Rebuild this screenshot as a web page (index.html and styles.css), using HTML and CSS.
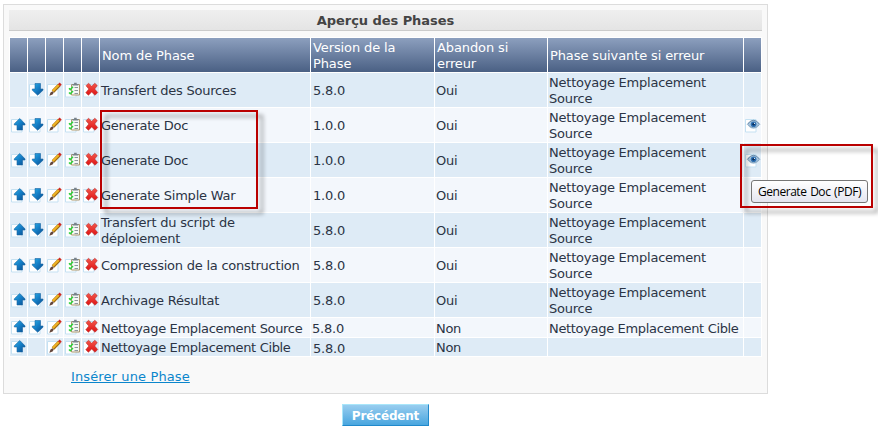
FILE: index.html
```html
<!DOCTYPE html>
<html lang="fr">
<head>
<meta charset="utf-8">
<title>Aperçu des Phases</title>
<link rel="stylesheet" href="styles.css">
</head>
<body>
<svg class="defs" width="0" height="0" aria-hidden="true">
  <defs>
    <linearGradient id="blue" x1="0" y1="0" x2="1" y2="1"><stop offset="0" stop-color="#2db0e8"/><stop offset=".5" stop-color="#147cc4"/><stop offset="1" stop-color="#0a4c8c"/></linearGradient>
    <linearGradient id="red" x1="0" y1="0" x2="0" y2="1"><stop offset="0" stop-color="#f4574c"/><stop offset="1" stop-color="#de1313"/></linearGradient>
    <symbol id="page" viewBox="0 0 17 18"><path d="M1.5 3.5h10.5v12.5h-10.500z" fill="#fff" stroke="#c5e1f2"/></symbol>
    <symbol id="up" viewBox="0 0 17 18"><use href="#page"/><path d="M9.700 2.500L15 7.800V9h-2.500v5h-5.500V9H4.300V7.800z" fill="url(#blue)" stroke="#1b65a2" stroke-width=".6"/></symbol>
    <symbol id="down" viewBox="0 0 17 18"><use href="#page"/><path d="M7 2.500h5.500V8H15v1.200L9.700 14.300 4.300 9.200V8H7z" fill="url(#blue)" stroke="#1b65a2" stroke-width=".6"/></symbol>
    <symbol id="edit" viewBox="0 0 17 18"><use href="#page"/><path d="M7 10.500L13.300 4" stroke="#9c6a12" stroke-width="3.400"/><path d="M6.800 10L13 3.700" stroke="#f0b323" stroke-width="2"/><path d="M13 4.300l1.700-1.700" stroke="#cf2a20" stroke-width="3"/><path d="M3.300 14.700l1.200-3.200 2-1.300 1.300 1.300-1.200 2z" fill="#65483c"/></symbol>
    <symbol id="list" viewBox="0 0 17 18"><use href="#page"/><path d="M7.500 3.500h8v10.500h-8z" fill="#f5f7f5" stroke="#ab976f"/><path d="M8.500 4.500V3h1.600V1.800h2.600V3H14.300v1.500z" fill="#77828a"/><path d="M10.500 6.500H14M10.500 9.500H14M10.500 12.500H14" stroke="#8a979d"/><path d="M5 7.300l1.300 1.300L9 5.800M5 11.500l1.300 1.300L9 10" fill="none" stroke="#2cd03b" stroke-width="1.500"/></symbol>
    <symbol id="delete" viewBox="0 0 17 18"><use href="#page"/><path d="M6.500 2.200l3.200 3 3.100-3L15.300 4.600 12.700 8l3 3.500-2.700 2.800-3.300-3.200-3.300 3.200L3.800 11.700 6.800 8 4 4.800z" fill="url(#red)" stroke="#a82525" stroke-width=".5"/></symbol>
    <symbol id="eye" viewBox="0 0 17 18"><use href="#page"/><path d="M3.300 8.500Q6 4 9.500 4T15.800 8.500Q13 12.700 9.500 12.700T3.300 8.500z" fill="#a9c6df"/><path d="M3.300 8.500Q6 4.300 9.500 4.300T15.800 8.500" fill="none" stroke="#6487a8"/><path d="M4.200 9Q9.500 14.300 15 9" fill="none" stroke="#86a5bf"/><circle cx="9.600" cy="8.300" r="2.800" fill="#2f70b2"/><circle cx="9.600" cy="8.300" r="1.300" fill="#092f5e"/><circle cx="10.500" cy="7.300" r=".6" fill="#fff"/></symbol>
  </defs>
</svg>

<main class="panel">
  <h1 class="title">Aperçu des Phases</h1>
  <div class="phases">
    <div class="row head"><i></i><i></i><i></i><i></i><i></i><span>Nom de Phase</span><span>Version de la Phase</span><span>Abandon si erreur</span><span>Phase suivante si erreur</span><i></i></div>
    <div class="row"><i></i><i><svg><use href="#down"/></svg></i><i><svg><use href="#edit"/></svg></i><i><svg><use href="#list"/></svg></i><i><svg><use href="#delete"/></svg></i><span>Transfert des Sources</span><span class="ver">5.8.0</span><span>Oui</span><span>Nettoyage Emplacement Source</span><i></i></div>
    <div class="row"><i><svg><use href="#up"/></svg></i><i><svg><use href="#down"/></svg></i><i><svg><use href="#edit"/></svg></i><i><svg><use href="#list"/></svg></i><i><svg><use href="#delete"/></svg></i><span>Generate Doc</span><span class="ver">1.0.0</span><span>Oui</span><span>Nettoyage Emplacement Source</span><i><svg><use href="#eye"/></svg></i></div>
    <div class="row"><i><svg><use href="#up"/></svg></i><i><svg><use href="#down"/></svg></i><i><svg><use href="#edit"/></svg></i><i><svg><use href="#list"/></svg></i><i><svg><use href="#delete"/></svg></i><span>Generate Doc</span><span class="ver">1.0.0</span><span>Oui</span><span>Nettoyage Emplacement Source</span><i><svg><use href="#eye"/></svg></i></div>
    <div class="row"><i><svg><use href="#up"/></svg></i><i><svg><use href="#down"/></svg></i><i><svg><use href="#edit"/></svg></i><i><svg><use href="#list"/></svg></i><i><svg><use href="#delete"/></svg></i><span>Generate Simple War</span><span class="ver">1.0.0</span><span>Oui</span><span>Nettoyage Emplacement Source</span><i></i></div>
    <div class="row"><i><svg><use href="#up"/></svg></i><i><svg><use href="#down"/></svg></i><i><svg><use href="#edit"/></svg></i><i><svg><use href="#list"/></svg></i><i><svg><use href="#delete"/></svg></i><span>Transfert du script de déploiement</span><span class="ver">5.8.0</span><span>Oui</span><span>Nettoyage Emplacement Source</span><i></i></div>
    <div class="row"><i><svg><use href="#up"/></svg></i><i><svg><use href="#down"/></svg></i><i><svg><use href="#edit"/></svg></i><i><svg><use href="#list"/></svg></i><i><svg><use href="#delete"/></svg></i><span>Compression de la construction</span><span class="ver">5.8.0</span><span>Oui</span><span>Nettoyage Emplacement Source</span><i></i></div>
    <div class="row"><i><svg><use href="#up"/></svg></i><i><svg><use href="#down"/></svg></i><i><svg><use href="#edit"/></svg></i><i><svg><use href="#list"/></svg></i><i><svg><use href="#delete"/></svg></i><span>Archivage Résultat</span><span class="ver">5.8.0</span><span>Oui</span><span>Nettoyage Emplacement Source</span><i></i></div>
    <div class="row short"><i><svg><use href="#up"/></svg></i><i><svg><use href="#down"/></svg></i><i><svg><use href="#edit"/></svg></i><i><svg><use href="#list"/></svg></i><i><svg><use href="#delete"/></svg></i><span>Nettoyage Emplacement Source</span><span class="ver">5.8.0</span><span>Non</span><span>Nettoyage Emplacement Cible</span><i></i></div>
    <div class="row last"><i><svg><use href="#up"/></svg></i><i></i><i><svg><use href="#edit"/></svg></i><i><svg><use href="#list"/></svg></i><i><svg><use href="#delete"/></svg></i><span>Nettoyage Emplacement Cible</span><span class="ver">5.8.0</span><span>Non</span><span></span><i></i></div>
  </div>
  <a class="insert" href="#">Insérer une Phase</a>
</main>
<button class="back" type="button">Précédent</button>

<div class="marker marker-names"></div>
<div class="marker marker-tip"></div>
<div class="tooltip">Generate Doc (PDF)</div>
</body>
</html>
```

FILE: styles.css
```css
* { box-sizing: border-box; }

body {
  position: relative;
  margin: 0;
  padding: 4px 0 0 3px;
  height: 431px;
  overflow: hidden;
  background: #fff;
  color: #2b3445;
  font: 13px/16px "DejaVu Sans", Verdana, sans-serif;
}

.defs { position: absolute; }

.panel {
  width: 765px;
  height: 390px;
  padding: 5px;
  border: 1px solid #dcdcdc;
  background: #f9f9f9;
}

.title {
  height: 21px;
  margin: 0;
  border-bottom: 1px solid #cbcbcb;
  background: linear-gradient(#efefef, #e4e4e4);
  color: #444;
  font-size: 13px;
  line-height: 21px;
  letter-spacing: -.06px;
  text-align: center;
}

.phases {
  display: grid;
  gap: 1px;
  width: 753px;
  margin-top: 6px;
  padding: 1px;
  background: #fff;
}

.row {
  display: grid;
  grid-template-columns: repeat(5, 17px) 210px 123px 112px 195px 17px;
  gap: 1px;
  height: 34px;
}

.row > * {
  display: flex;
  align-items: center;
  background: #f3f7fc;
}

.row:nth-child(even) > * { background: #deebf6; }

.row span {
  padding: 2px 2px 0 1px;
  letter-spacing: -.23px;
}

.row.head > * {
  background: linear-gradient(#8c9fbe, #4a6084);
  color: #fff;
}

.row.head span {
  padding-left: 2px;
  letter-spacing: -.11px;
}

.row .ver {
  padding-left: 2px;
  letter-spacing: -.2px;
}

.row.short { height: 19px; }
.row.last { height: 18px; }

.row.short span, .row.last span {
  letter-spacing: -.33px;
  white-space: nowrap;
}

.row.short .ver, .row.last .ver { letter-spacing: -.2px; }
.row.short .ver { padding-left: 1px; }

.row.last .ver {
  padding-top: 4px;
  line-height: 14px;
}

.row svg {
  display: block;
  flex: none;
  width: 17px;
  height: 18px;
}

.row.short svg, .row.last svg { margin-top: -1px; }

.insert {
  display: inline-block;
  margin: 12px 0 0 62px;
  color: #0b86cc;
  letter-spacing: .12px;
}

.back {
  display: block;
  width: 87px;
  height: 22px;
  margin: 10px 0 0 339px;
  padding: 0;
  border: 1px solid;
  border-color: #a8e6fa #2089cb #2089cb #a8e6fa;
  background: linear-gradient(#98cdef, #49a6df);
  color: #fff;
  font: bold 12px/22px "DejaVu Sans", Verdana, sans-serif;
  letter-spacing: -.2px;
}

.marker {
  position: absolute;
  border: 2px solid #ba0000;
  filter: drop-shadow(5px 5px 2px rgba(0, 0, 0, .4));
}

.marker-names { left: 100px; top: 110px; width: 158px; height: 99px; }
.marker-tip { left: 740px; top: 144px; width: 133px; height: 64px; }

.tooltip {
  position: absolute;
  left: 751px;
  top: 180px;
  width: 117px;
  height: 23px;
  border: 1px solid #767676;
  border-radius: 3px;
  background: linear-gradient(#fff, #e4e5f0);
  color: #000;
  font: 12px/22px "Open Sans", "Noto Sans", sans-serif;
  letter-spacing: -.46px;
  word-spacing: 1px;
  text-align: center;
  white-space: nowrap;
}
```
